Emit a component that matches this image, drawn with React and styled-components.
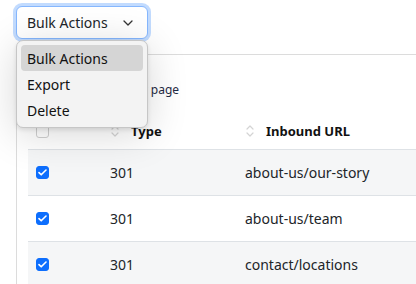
import styled, { createGlobalStyle } from 'styled-components';

const GlobalStyle = createGlobalStyle`
  html, body {
    margin: 0;
    background: #ffffff;
    font-family: "Noto Sans", "Open Sans", sans-serif;
    color: #212529;
  }
`;

const Page = styled.div`
  position: relative;
  padding: 6px 0 0 16px;
  height: 278px;
  overflow: hidden;
`;

const SelectWrap = styled.div`
  position: relative;
  width: 132px;
  z-index: 2;
`;

const SelectButton = styled.div`
  box-sizing: border-box;
  height: 33px;
  display: flex;
  align-items: center;
  justify-content: space-between;
  padding: 0 14px 0 10px;
  background: #fff;
  border: 1px solid #86b7fe;
  border-radius: 6px;
  box-shadow: 0 0 0 3px rgba(13, 110, 253, 0.25);
  font-size: 14px;
  color: #212529;
`;

const Menu = styled.ul`
  position: absolute;
  top: 34px;
  left: 0;
  box-sizing: border-box;
  width: 132px;
  margin: 0;
  padding: 4px;
  list-style: none;
  background: #f3f3f3;
  border: 1px solid #c6c6c6;
  border-radius: 7px;
  box-shadow: 0 6px 40px rgba(0, 0, 0, 0.16), 0 2px 4px rgba(0, 0, 0, 0.1);
`;

const MenuItem = styled.li`
  height: 26px;
  display: flex;
  align-items: center;
  padding: 0 6px;
  border-radius: 4px;
  font-size: 14px;
  color: #111;
  background: ${(p) => (p.$active ? '#d5d5d5' : 'transparent')};
`;

const Card = styled.div`
  margin-top: 15px;
  border-top: 1px solid #dcdcdc;
  border-left: 1px solid #dcdcdc;
  padding: 26px 0 0 11px;
`;

const Info = styled.div`
  font-size: 12px;
  line-height: 18px;
  color: #1f2a44;
  padding-left: 8px;
`;

const Table = styled.div`
  margin-top: 14px;
  display: grid;
  grid-template-columns: 74px 135px 1fr;
`;

const HeadCell = styled.div`
  height: 36px;
  display: flex;
  align-items: center;
  gap: 11px;
  padding-left: 8px;
  font-size: 13px;
  font-weight: 700;
  color: #111;
  border-bottom: 1px solid #dee2e6;
`;

const Cell = styled.div`
  box-sizing: border-box;
  height: 46px;
  display: flex;
  align-items: center;
  padding-left: 8px;
  font-size: 14px;
  color: #212529;
  background: ${(p) => (p.$striped ? '#f5f6f7' : '#fff')};
  border-bottom: 1px solid #dee2e6;
`;

const Box = styled.span`
  box-sizing: border-box;
  width: 13px;
  height: 13px;
  border-radius: 3px;
  display: inline-flex;
  align-items: center;
  justify-content: center;
  background: ${(p) => (p.$checked ? '#0d6efd' : '#fff')};
  border: 1px solid ${(p) => (p.$checked ? '#0d6efd' : '#d0d0d0')};
`;

const Chevron = () => (
  <svg width="10" height="6" viewBox="0 0 10 6" fill="none">
    <path d="M1 1l4 4 4-4" stroke="#333" strokeWidth="1.3" strokeLinecap="round" strokeLinejoin="round" />
  </svg>
);

const SortIcon = () => (
  <svg width="10" height="14" viewBox="0 0 10 14" fill="none">
    <path d="M2 5l3-3 3 3M2 9l3 3 3-3" stroke="#d4d4d4" strokeWidth="1.2" strokeLinecap="round" strokeLinejoin="round" />
  </svg>
);

const Check = () => (
  <svg width="9" height="7" viewBox="0 0 9 7" fill="none">
    <path d="M1 3.6l2.2 2.2L8 1" stroke="#fff" strokeWidth="1.6" strokeLinecap="round" strokeLinejoin="round" />
  </svg>
);

const rows = [
  { type: '301', url: 'about-us/our-story' },
  { type: '301', url: 'about-us/team' },
  { type: '301', url: 'contact/locations' },
];

export default function App() {
  return (
    <>
      <GlobalStyle />
      <Page>
        <SelectWrap>
          <SelectButton>
            <span>Bulk Actions</span>
            <Chevron />
          </SelectButton>
          <Menu>
            <MenuItem $active>Bulk Actions</MenuItem>
            <MenuItem>Export</MenuItem>
            <MenuItem>Delete</MenuItem>
          </Menu>
        </SelectWrap>
        <Card>
          <Info>Show 25 entries per page</Info>
          <Table>
            <HeadCell>
              <Box />
            </HeadCell>
            <HeadCell>
              <SortIcon />
              Type
            </HeadCell>
            <HeadCell>
              <SortIcon />
              Inbound URL
            </HeadCell>
            {rows.map((r, i) => [
              <Cell key={`c${i}`} $striped={i % 2 === 0}>
                <Box $checked>
                  <Check />
                </Box>
              </Cell>,
              <Cell key={`t${i}`} $striped={i % 2 === 0}>
                {r.type}
              </Cell>,
              <Cell key={`u${i}`} $striped={i % 2 === 0}>
                {r.url}
              </Cell>,
            ])}
          </Table>
        </Card>
      </Page>
    </>
  );
}
